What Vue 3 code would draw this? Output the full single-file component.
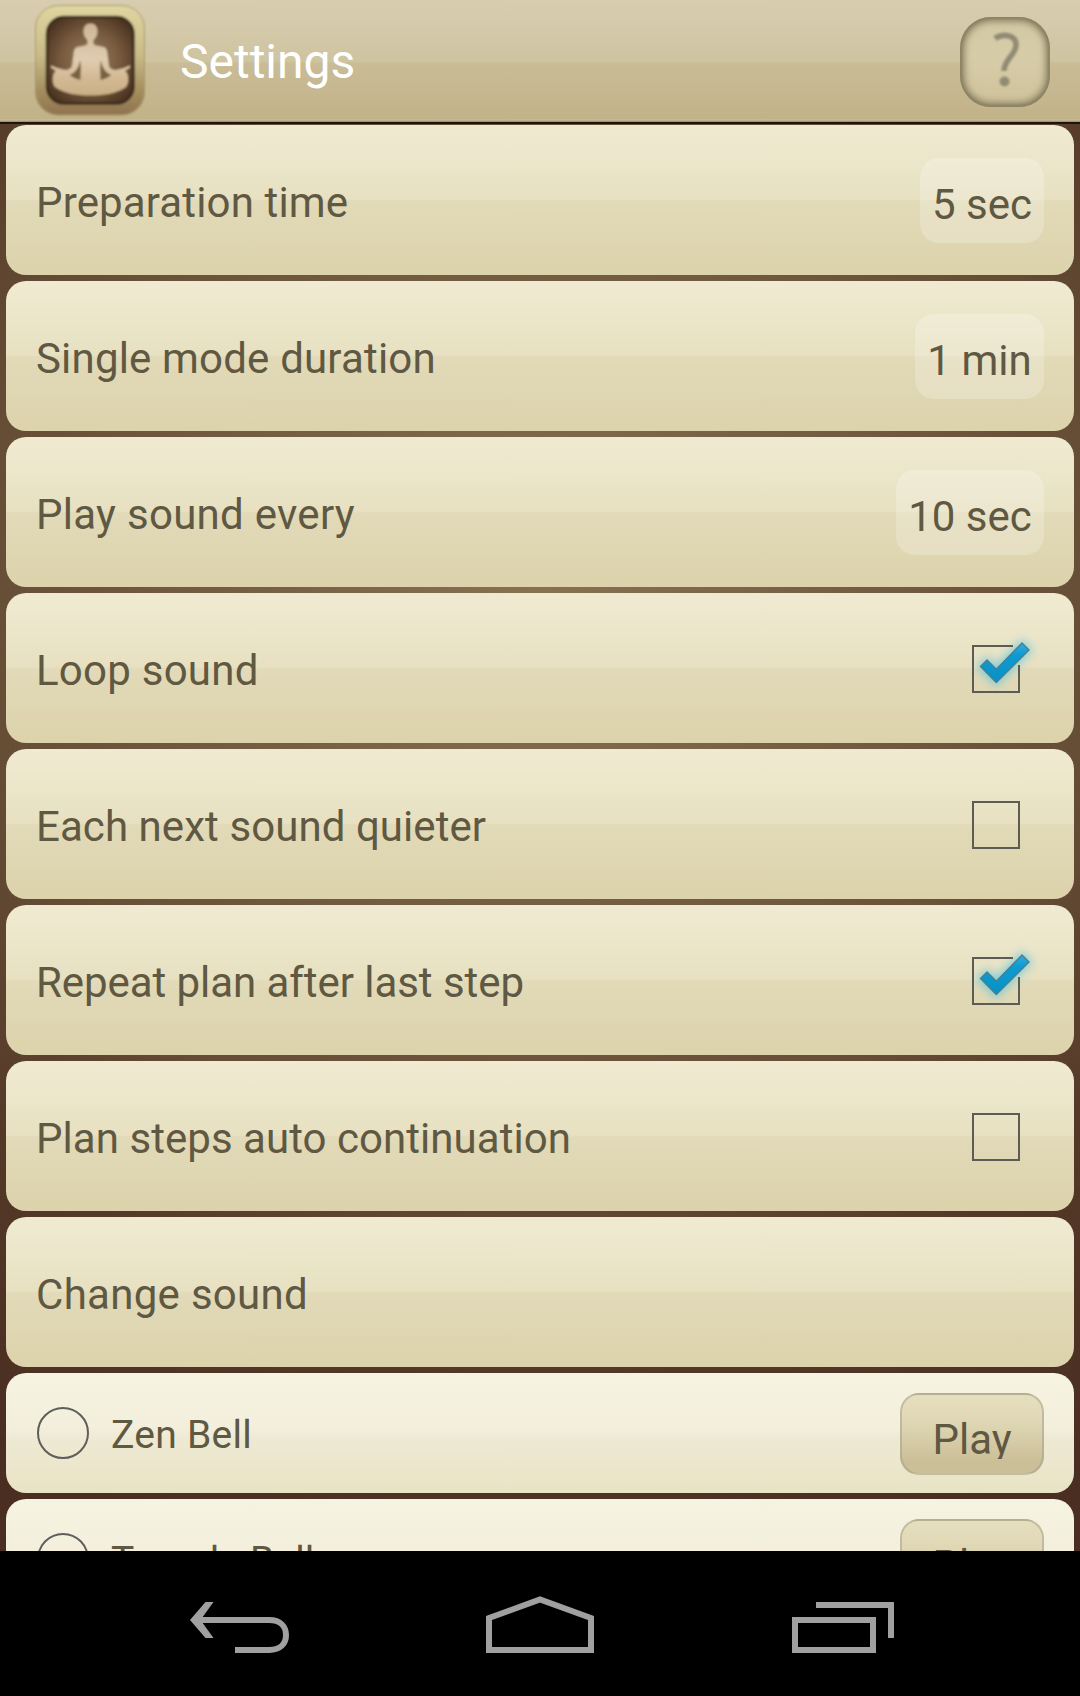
<script setup>
const values = [
  { label: 'Preparation time', value: '5 sec', w: 124, ls: 0.15 },
  { label: 'Single mode duration', value: '1 min', w: 129, ls: 0.18 },
  { label: 'Play sound every', value: '10 sec', w: 148, ls: 0.28 },
]
const checks = [
  { label: 'Loop sound', on: true, ls: 0.24 },
  { label: 'Each next sound quieter', on: false, ls: 0.07 },
  { label: 'Repeat plan after last step', on: true, ls: -0.06 },
  { label: 'Plan steps auto continuation', on: false, ls: 0.05 },
]
const sounds = [
  { name: 'Zen Bell', ls: 0.27 },
  { name: 'Temple Bell', ls: 0.13 },
]
</script>

<template>
  <div class="screen">
    <header class="bar">
      <svg class="logo" width="112" height="118" viewBox="0 0 112 118">
        <defs>
          <linearGradient id="frame" x1="0" y1="0" x2="0" y2="1">
            <stop offset="0" stop-color="#e0d6a2" />
            <stop offset=".45" stop-color="#c9bc88" />
            <stop offset=".8" stop-color="#a28b5c" />
            <stop offset="1" stop-color="#8f7350" />
          </linearGradient>
          <radialGradient id="inside" cx=".5" cy=".5" r=".62">
            <stop offset="0" stop-color="#9a7f60" />
            <stop offset=".55" stop-color="#775a3e" />
            <stop offset="1" stop-color="#47301f" />
          </radialGradient>
          <linearGradient id="skin" x1="0" y1="0" x2="0" y2="1">
            <stop offset="0" stop-color="#cdb695" />
            <stop offset=".5" stop-color="#e0ccb0" />
            <stop offset=".75" stop-color="#d3ba94" />
            <stop offset="1" stop-color="#c9af86" />
          </linearGradient>
          <filter id="soft" x="-10%" y="-10%" width="120%" height="120%"><feGaussianBlur stdDeviation=".9" /></filter>
        </defs>
        <g filter="url(#soft)">
          <rect x="1.500" y="5.500" width="109" height="109.500" rx="23" fill="url(#frame)" stroke="#a8946a" stroke-width="1" />
          <rect x="13" y="17" width="86.500" height="86.500" rx="17" fill="url(#inside)" stroke="#38291a" stroke-width="2.500" />
          <path fill="url(#skin)" d="M56.500 23.500c-4.500 0-7 3.500-7 8 0 4 2 6.500 4 8.500v4c-2 2-7 2.500-10 3-3 .8-3.700 4-4 8l-1.500 11c-.7 2.500-4 4-7 4l-8-2-6-2.500v2l5 3.500-2 2c-2 5-1.500 11 1 14 9 6.500 22 8.500 35.500 8.500s26.500-2 35.500-8.500c2.500-3 3-9 1-14l-2-2 5-3.500v-2l-6 2.500-8 2c-3 0-6.300-1.500-7-4L73.500 55c-.3-4-1-7.200-4-8-3-.5-8-1-10-3v-4c2-2 4-4.500 4-8.500 0-4.500-2.500-8-7-8z" />
          <path fill="#79603f" d="M46 60c1.500 6 .5 13 .5 20-4-.5-7.500-2.500-11-5 6-2.500 9.500-7 10.500-15zM67 60c-1.500 6-.5 13-.5 20 4-.5 7.500-2.500 11-5-6-2.500-9.500-7-10.500-15z" />
        </g>
      </svg>
      <h1>Settings</h1>
      <svg class="help" width="90" height="90" viewBox="0 0 90 90">
        <defs>
          <linearGradient id="hg" x1="0" y1="0" x2="0" y2="1">
            <stop offset="0" stop-color="#d2c8a4" />
            <stop offset=".45" stop-color="#d6cda8" />
            <stop offset="1" stop-color="#cfc19a" />
          </linearGradient>
          <filter id="hb"><feGaussianBlur stdDeviation="3.500" /></filter>
          <filter id="eb"><feGaussianBlur stdDeviation=".8" /></filter>
          <filter id="qb" x="-20%" y="-20%" width="140%" height="140%"><feGaussianBlur stdDeviation="1" /></filter>
          <clipPath id="hc"><rect width="90" height="90" rx="31" /></clipPath>
        </defs>
        <g clip-path="url(#hc)">
          <rect width="90" height="90" fill="url(#hg)" />
          <rect width="90" height="90" rx="31" fill="none" stroke="#8b8262" stroke-width="9" filter="url(#hb)" />
          <rect x=".5" y=".5" width="89" height="89" rx="31" fill="none" stroke="#8b8264" stroke-width="3" filter="url(#eb)" />
        </g>
        <g filter="url(#qb)" fill="none" stroke="#918b73" stroke-width="5.500">
          <path d="M35 21.500C42 16.500 56 17 56 28c0 10-12 14-12 26" />
          <circle cx="44.500" cy="64.500" r="5" fill="#918b73" stroke="none" />
        </g>
      </svg>
    </header>

    <main class="list">
      <div v-for="r in values" :key="r.label" class="row">
        <span class="label" :style="{ letterSpacing: r.ls + 'px' }">{{ r.label }}</span>
        <span class="pill" :style="{ width: r.w + 'px' }">{{ r.value }}</span>
      </div>
      <div v-for="r in checks" :key="r.label" class="row">
        <span class="label" :style="{ letterSpacing: r.ls + 'px' }">{{ r.label }}</span>
        <svg class="check" width="96" height="96" viewBox="0 0 96 96">
          <path v-if="!r.on" d="M25 25h46v46H25z" fill="none" stroke="#5e5b55" stroke-width="2" />
          <template v-else>
            <defs>
              <linearGradient id="tick" x1="0" y1="0" x2="0" y2="1">
                <stop offset="0" stop-color="#35ade0" />
                <stop offset=".3" stop-color="#0e9bd2" />
                <stop offset="1" stop-color="#0791c6" />
              </linearGradient>
              <filter id="glow" x="-40%" y="-40%" width="180%" height="180%"><feGaussianBlur stdDeviation="5" /></filter>
            </defs>
            <path d="M32 46l7-7 9 9 26-26 7 7-33 33z" fill="#45c2e6" stroke="#45c2e6" stroke-width="5" opacity=".65" filter="url(#glow)" />
            <path d="M65 25H25v46h46V44" fill="none" stroke="#5e5b55" stroke-width="2" />
            <path d="M32.500 45.500l6.500-6.500 9.300 9.300L74 22l7 7-32.700 32.500z" fill="url(#tick)" stroke="#4c7e8c" stroke-width="1.400" />
          </template>
        </svg>
      </div>
      <div class="row"><span class="label change">Change sound</span></div>
      <div v-for="s in sounds" :key="s.name" class="row sound">
        <i class="radio"></i>
        <span class="name" :style="{ letterSpacing: s.ls + 'px' }">{{ s.name }}</span>
        <button class="play"><span>Play</span></button>
      </div>
    </main>

    <nav class="nav">
      <svg width="1080" height="145" viewBox="0 0 1080 145" fill="none" stroke="#a0a0a0" stroke-width="6">
        <path d="M199 69h70c12 0 17 7 17 15s-5 15-17 15h-34" />
        <path d="M205.500 51h8L200.500 69l13 18h-8L190 69z" fill="#a0a0a0" stroke="none" />
        <path d="M489 67l51-18.500L591 67v32H489z" />
        <path d="M795 69h78v30h-78z" />
        <path d="M816 54h75v33" />
      </svg>
    </nav>
  </div>
</template>

<style>
body { margin: 0; background: #000; }
</style>

<style scoped>
.screen {
  width: 1080px;
  height: 1696px;
  display: flex;
  flex-direction: column;
  overflow: hidden;
  font-family: Roboto, sans-serif;
  color: #5f5842;
  background: radial-gradient(circle 1000px at 540px 600px, #867251 0%, #674f37 54%, #543928 75%, #4a2e22 100%);
}
.bar {
  box-sizing: border-box;
  flex: none;
  height: 124px;
  padding: 0 30px 0 34px;
  display: flex;
  align-items: flex-start;
  border-bottom: 2px solid #1d140d;
  background: linear-gradient(#d8cdb0 0, #cfc4a0 62px, #c9bc96 63px, #c2b289 119px, #cbbf9a 120px, #8f8465 122px);
}
.logo { flex: none; }
h1 {
  flex: 1;
  margin: 0 0 0 34px;
  font-size: 48px;
  font-weight: 400;
  line-height: 56px;
  padding-top: 34px;
  color: #fff;
}
.help { margin-top: 17px; }
.list {
  flex: none;
  box-sizing: border-box;
  height: 1427px;
  padding: 1px 6px 0;
  display: flex;
  flex-direction: column;
  gap: 6px;
  overflow: hidden;
}
.row {
  flex: none;
  box-sizing: border-box;
  height: 150px;
  padding: 0 30px;
  display: flex;
  align-items: center;
  border-radius: 20px;
  background: linear-gradient(#f0ead2 0%, #ece7cb 22%, #e7e0c1 49.500%, #e2dab8 50.500%, #dcd3ac 100%);
}
.label { flex: 1; font-size: 42px; line-height: 50px; padding-top: 5px; white-space: nowrap; }
.change { letter-spacing: .3px; }
.pill {
  box-sizing: border-box;
  height: 85px;
  padding-top: 8px;
  border-radius: 19px;
  text-align: center;
  font-size: 42px;
  line-height: 77px;
  background: rgba(255, 255, 255, .22);
}
.check { margin-top: 2px; }
.sound {
  height: 120px;
  padding-left: 31px;
  background: linear-gradient(#f6f3e2 0%, #f3efdc 45%, #eee9d3 56%, #e9e3c5 100%);
}
.radio { box-sizing: border-box; width: 52px; height: 52px; border: 2px solid #5e5e5b; border-radius: 50%; }
.name { flex: 1; margin-left: 22px; padding-top: 4px; font-size: 39px; line-height: 46px; }
.play {
  box-sizing: border-box;
  width: 144px;
  height: 82px;
  margin-top: 2px;
  padding: 20px 0 0;
  display: flex;
  justify-content: center;
  align-items: flex-start;
  border: 2px solid rgba(160, 157, 135, .5);
  border-radius: 19px;
  background: linear-gradient(#e6dfbe 0%, #dfd7b4 35%, #cbbf98 85%, #cbbf98 100%);
  font: 42px/50px Roboto, sans-serif;
  color: inherit;
}
.play span { height: 44px; overflow: hidden; padding: 0 1px; }
.nav { flex: none; height: 145px; background: #000; }
.nav svg { display: block; }
</style>
